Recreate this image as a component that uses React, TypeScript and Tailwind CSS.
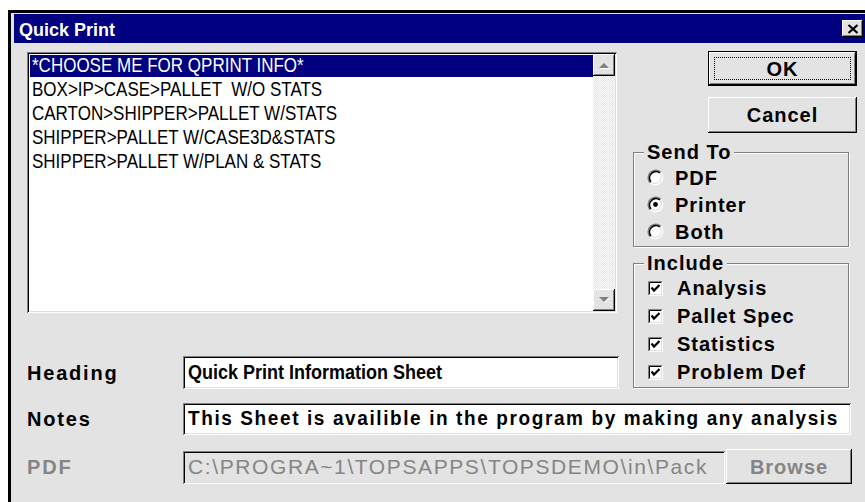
import React from "react";

const raised =
  "shadow-[inset_-1px_-1px_0_#000,inset_1px_1px_0_#fff,inset_-2px_-2px_0_#808080,inset_2px_2px_0_#e3e3e3]";
const sunken =
  "shadow-[inset_1px_1px_0_#808080,inset_-1px_-1px_0_#fff,inset_2px_2px_0_#000,inset_-2px_-2px_0_#dfdfdf]";

function Radio({ checked }: { checked?: boolean }) {
  return (
    <svg width="17" height="17" viewBox="0 0 17 17" className="shrink-0">
      <circle cx="8.5" cy="8.5" r="7.2" fill="#fff" />
      <path d="M3.2 13.8 A7.5 7.5 0 0 1 13.8 3.2" fill="none" stroke="#808080" strokeWidth="1.5" />
      <path d="M13.8 3.2 A7.5 7.5 0 0 1 3.2 13.8" fill="none" stroke="#fff" strokeWidth="1.2" />
      <path d="M4 13 A6.4 6.4 0 0 1 13 4" fill="none" stroke="#000" strokeWidth="1.6" />
      <path d="M13 4 A6.4 6.4 0 0 1 4 13" fill="none" stroke="#e3e3e3" strokeWidth="1.2" />
      {checked && <circle cx="8.5" cy="8.5" r="2.4" fill="#000" />}
    </svg>
  );
}

function Check() {
  return (
    <svg width="15" height="15" viewBox="0 0 15 15" className="shrink-0">
      <rect x="0" y="0" width="15" height="15" fill="#fff" />
      <path d="M0.5 14.5 V0.5 H14.5" fill="none" stroke="#808080" strokeWidth="1" />
      <path d="M1.5 13.5 V1.5 H13.5" fill="none" stroke="#000" strokeWidth="1" />
      <path d="M0.5 14.5 H14.5 V0.5" fill="none" stroke="#fff" strokeWidth="1" />
      <path d="M1.5 13.5 H13.5 V1.5" fill="none" stroke="#dfdfdf" strokeWidth="1" />
      <polyline points="3.5,6.5 6,9.5 11.5,4" fill="none" stroke="#000" strokeWidth="2.2" />
    </svg>
  );
}

function Arrow({ up }: { up?: boolean }) {
  return (
    <svg width="12" height="8" viewBox="0 0 12 8">
      {up ? (
        <>
          <polygon points="1,7 11,7 6,2" fill="#fff" transform="translate(1,1)" />
          <polygon points="1,7 11,7 6,2" fill="#808080" />
        </>
      ) : (
        <>
          <polygon points="1,1 11,1 6,6" fill="#fff" transform="translate(1,1)" />
          <polygon points="1,1 11,1 6,6" fill="#808080" />
        </>
      )}
    </svg>
  );
}

function GroupBox({
  title,
  className,
  children,
}: {
  title: string;
  className: string;
  children: React.ReactNode;
}) {
  return (
    <div
      className={`relative w-[216px] border border-[#808080] shadow-[1px_1px_0_#fff,inset_1px_1px_0_#fff] ${className}`}
    >
      <span className="absolute -top-[12px] left-[10px] bg-[#e3e3e3] px-[3px] text-[20px] leading-[22px] font-bold tracking-[1px] text-black">
        {title}
      </span>
      {children}
    </div>
  );
}

const items = [
  "*CHOOSE ME FOR QPRINT INFO*",
  "BOX>IP>CASE>PALLET  W/O STATS",
  "CARTON>SHIPPER>PALLET W/STATS",
  "SHIPPER>PALLET W/CASE3D&STATS",
  "SHIPPER>PALLET W/PLAN & STATS",
];

export default function App() {
  return (
    <div className="w-[865px] h-[502px] overflow-hidden bg-white pt-[10px] pl-[8px] font-['Liberation_Sans',Arial,sans-serif]">
      <div className="h-[492px] w-[857px] border-l-[3px] border-t-[3px] border-black bg-[#e3e3e3] pl-[3px] pt-[1px]">
        {/* caption bar */}
        <div className="flex h-[29px] items-center justify-between bg-[#000080] pl-[5px] pr-[2px]">
          <span className="pt-[3px] text-[18px] font-bold leading-none text-white">Quick Print</span>
          <div className={`flex h-[17px] w-[21px] items-center justify-center bg-[#e3e3e3] ${raised}`}>
            <svg width="12" height="10" viewBox="0 0 12 10">
              <path d="M1.5 1 L10.5 9 M10.5 1 L1.5 9" stroke="#000" strokeWidth="2.2" />
            </svg>
          </div>
        </div>

        <div className="pl-[13px] pt-[9px]">
          <div className="flex items-start">
            {/* left column: list + heading */}
            <div className="flex w-[592px] flex-col">
              <div className={`flex h-[261px] w-[590px] bg-white p-[2px] ${sunken}`}>
                <div className="flex-1 pl-[1px] pt-[1px]">
                  {items.map((t, i) => (
                    <div key={t} className="h-[24px]">
                      <div
                        className={`h-[22px] whitespace-pre pl-[2px] text-[17px] leading-[22px] ${
                          i === 0 ? "bg-[#000080] text-white" : "text-black"
                        }`}
                      >
                        <span className="inline-block scale-y-[1.15]">{t}</span>
                      </div>
                    </div>
                  ))}
                </div>
                <div className="flex w-[22px] flex-col">
                  <div className={`flex h-[22px] items-center justify-center bg-[#e3e3e3] ${raised}`}>
                    <Arrow up />
                  </div>
                  <div className="flex-1 bg-[repeating-conic-gradient(#ffffff_0%_25%,#e3e3e3_0%_50%)] bg-[length:2px_2px]" />
                  <div className={`flex h-[22px] items-center justify-center bg-[#e3e3e3] ${raised}`}>
                    <Arrow />
                  </div>
                </div>
              </div>

              <div className="mt-[43px] flex items-center">
                <span className="w-[156px] text-[20px] font-bold tracking-[1.8px] text-black">Heading</span>
                <div className={`flex h-[33px] w-[436px] items-center bg-white pl-[5px] ${sunken}`}>
                  <span className="inline-block scale-y-[1.12] text-[18px] font-bold text-black">
                    Quick Print Information Sheet
                  </span>
                </div>
              </div>
            </div>

            {/* right column: buttons + option groups */}
            <div className="ml-[14px] flex w-[224px] flex-col">
              <div className={`-mt-[1px] ml-[75px] flex h-[35px] w-[149px] border border-black bg-[#e3e3e3] p-[5px] ${raised}`}>
                <div className="flex flex-1 items-center justify-center border border-dotted border-black">
                  <span className="text-[20px] font-bold tracking-[1px] text-black">OK</span>
                </div>
              </div>
              <div className={`ml-[75px] mt-[11px] flex h-[36px] w-[149px] items-center justify-center bg-[#e3e3e3] ${raised}`}>
                <span className="text-[20px] font-bold tracking-[1px] text-black">Cancel</span>
              </div>

              <GroupBox title="Send To" className="mt-[19px] h-[95px] pl-[13px] pt-[11px]">
                {[
                  ["PDF", false],
                  ["Printer", true],
                  ["Both", false],
                ].map(([label, on]) => (
                  <div key={label as string} className="flex h-[27px] items-center">
                    <Radio checked={on as boolean} />
                    <span className="ml-[11px] text-[20px] font-bold tracking-[1px] text-black">{label as string}</span>
                  </div>
                ))}
              </GroupBox>

              <GroupBox title="Include" className="mt-[16px] h-[125px] pl-[14px] pt-[10px]">
                {["Analysis", "Pallet Spec", "Statistics", "Problem Def"].map((label) => (
                  <div key={label} className="flex h-[28px] items-center">
                    <Check />
                    <span className="ml-[14px] text-[20px] font-bold tracking-[1px] text-black">{label}</span>
                  </div>
                ))}
              </GroupBox>
            </div>
          </div>

          <div className="mt-[14px] flex items-center">
            <span className="w-[156px] text-[20px] font-bold tracking-[1.8px] text-black">Notes</span>
            <div className={`flex h-[32px] w-[668px] items-center overflow-hidden whitespace-nowrap bg-white pl-[5px] ${sunken}`}>
              <span className="inline-block scale-y-[1.08] text-[19px] font-bold tracking-[1.6px] text-black">
                This Sheet is availible in the program by making any analysis
              </span>
            </div>
          </div>

          <div className="mt-[14px] flex items-center">
            <span className="w-[156px] text-[20px] font-bold tracking-[1.8px] text-[#858585]">PDF</span>
            <div className={`mt-[1px] flex h-[33px] w-[542px] items-center overflow-hidden whitespace-nowrap bg-[#e3e3e3] pl-[5px] ${sunken}`}>
              <span className="text-[21px] tracking-[1.6px] text-[#858585]">
                C:\PROGRA~1\TOPSAPPS\TOPSDEMO\in\Pack
              </span>
            </div>
            <div className={`ml-[1px] flex h-[35px] w-[126px] items-center justify-center bg-[#e3e3e3] ${raised}`}>
              <span className="text-[20px] font-bold tracking-[1px] text-[#858585]">Browse</span>
            </div>
          </div>
        </div>
      </div>
    </div>
  );
}
